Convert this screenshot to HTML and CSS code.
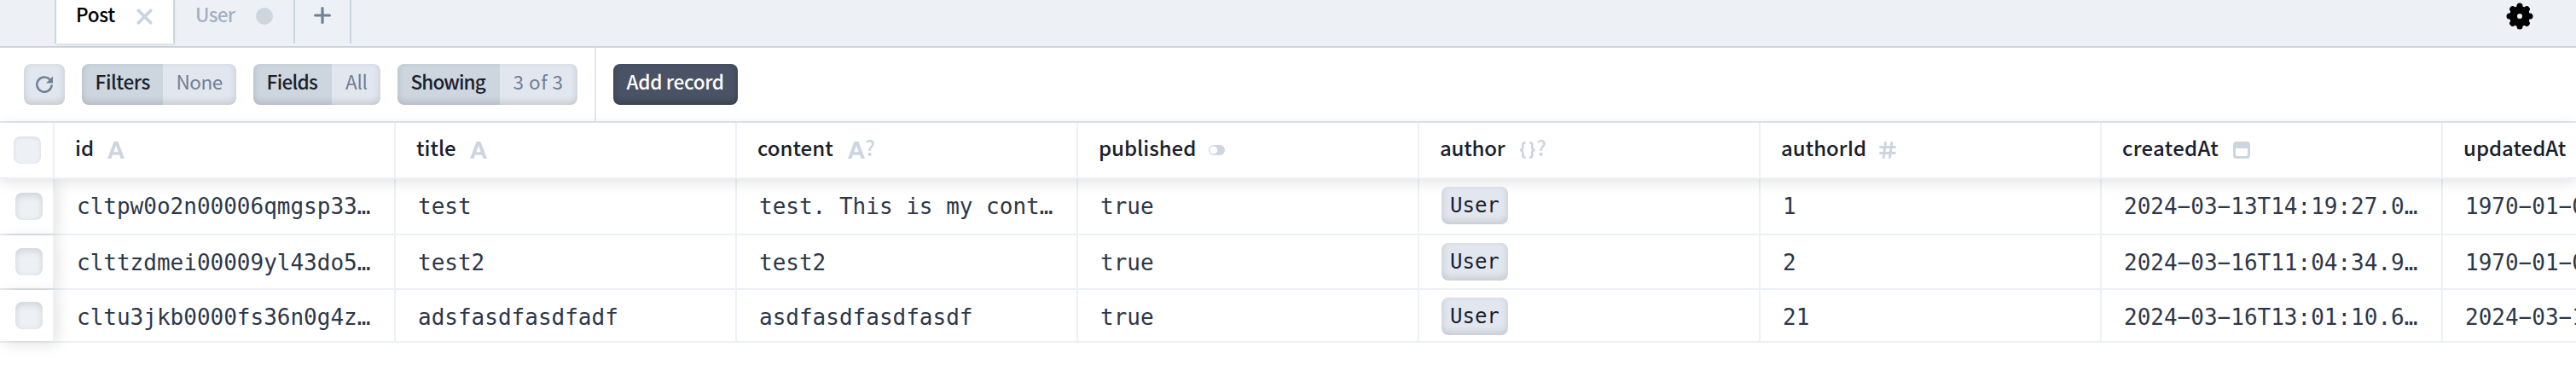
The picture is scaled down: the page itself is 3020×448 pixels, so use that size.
FILE: index.html
```html
<!DOCTYPE html>
<html lang="en">
<head>
<meta charset="utf-8">
<title>Post</title>
<link rel="stylesheet" href="styles.css">
</head>
<body>
<svg class="defs" width="0" height="0">
  <symbol id="i-text" viewBox="0 0 20 20"><path fill="currentColor" fill-rule="evenodd" d="M7.600 0h4.800L20 20h-4.400l-1.500-4.200H5.900L4.400 20H0zM10 4.700 7.300 12.200h5.400z"/></symbol>
  <symbol id="i-bool" viewBox="0 0 20 20"><rect y="4" width="19" height="12" rx="6" fill="currentColor"/><circle cx="5.700" cy="10" r="4.500" fill="#fff"/></symbol>
  <symbol id="i-obj" viewBox="0 0 20 20"><path fill="none" stroke="currentColor" stroke-width="2.700" d="M7.500 1.400H6.800Q4.300 1.400 4.300 4v2.500Q4.300 10 1 10q3.300 0 3.300 3.500V16q0 2.600 2.500 2.600h.700M12 1.400h.700q2.500 0 2.500 2.600v2.500Q15.200 10 18.500 10q-3.300 0-3.300 3.500V16q0 2.600-2.500 2.600H12"/></symbol>
  <symbol id="i-num" viewBox="0 0 20 20"><path fill="none" stroke="currentColor" stroke-width="3" stroke-linecap="round" d="M7.500 1.500l-2.300 17M14.800 1.500l-2.300 17M1.500 6.500h17M1.500 13.500h17"/></symbol>
  <symbol id="i-date" viewBox="0 0 20 20"><path fill="currentColor" fill-rule="evenodd" d="M4 0h12a4 4 0 0 1 4 4v12a4 4 0 0 1-4 4H4a4 4 0 0 1-4-4V4a4 4 0 0 1 4-4zM3 8v7q0 2 2 2h10q2 0 2-2V8z"/></symbol>
</svg>

<nav class="tabs">
  <div class="tab tab-active"><span class="tab-label">Post</span>
    <svg class="close" viewBox="0 0 20 20"><path d="M2.500 2.500l15 15M17.500 2.500l-15 15"/></svg></div>
  <div class="tab tab-idle"><span class="tab-label">User</span><i class="dot"></i></div>
  <div class="tab tab-add"><svg class="plus" viewBox="0 0 20 20"><path d="M10 1.600v16.800M1.600 10h16.800"/></svg></div>
  <svg class="gear" viewBox="0 0 32 32"><g stroke="#000" stroke-width="7" stroke-linecap="round"><path d="M16 4v5M16 23v5M4 16h5M23 16h5M7.700 7.700l3 3M21.300 21.300l3 3M24.300 7.700l-3 3M10.700 21.300l-3 3"/></g><circle cx="16" cy="16" r="7.500" fill="none" stroke="#000" stroke-width="9"/></svg>
</nav>

<header class="toolbar">
  <button class="btn refresh"><svg viewBox="0 0 20 20"><path class="arc" d="M16.300 4.100A8.700 8.700 0 1 0 18.600 11.500"/><path class="head-arrow" d="M20 .5V8.500h-8z"/></svg></button>
  <button class="btn filters"><b>Filters</b><span>None</span></button>
  <button class="btn fields"><b>Fields</b><span>All</span></button>
  <button class="btn showing"><b>Showing</b><span>3 of 3</span></button>
  <i class="divider"></i>
  <button class="btn add">Add record</button>
</header>

<main class="grid">
  <div class="row head">
    <div class="check"><i></i></div>
    <div class="cell"><span class="name n-id">id</span><svg><use href="#i-text"/></svg></div>
    <div class="cell"><span class="name n-title">title</span><svg><use href="#i-text"/></svg></div>
    <div class="cell"><span class="name n-content">content</span><svg><use href="#i-text"/></svg><span class="opt">?</span></div>
    <div class="cell"><span class="name n-published">published</span><svg><use href="#i-bool"/></svg></div>
    <div class="cell"><span class="name n-author">author</span><svg><use href="#i-obj"/></svg><span class="opt">?</span></div>
    <div class="cell"><span class="name n-authorid">authorId</span><svg><use href="#i-num"/></svg></div>
    <div class="cell"><span class="name n-created">createdAt</span><svg><use href="#i-date"/></svg></div>
    <div class="cell"><span class="name n-updated">updatedAt</span></div>
  </div>
  <div class="body">
    <div class="row r1">
      <div class="check"><i></i></div>
      <div class="cell">cltpw0o2n00006qmgsp33…</div><div class="cell">test</div><div class="cell">test. This is my cont…</div><div class="cell">true</div>
      <div class="cell"><span class="btn chip">User</span></div><div class="cell">1</div><div class="cell">2024−03−13T14:19:27.0…</div><div class="cell">1970−01−0</div>
    </div>
    <div class="row r2">
      <div class="check"><i></i></div>
      <div class="cell">clttzdmei00009yl43do5…</div><div class="cell">test2</div><div class="cell">test2</div><div class="cell">true</div>
      <div class="cell"><span class="btn chip">User</span></div><div class="cell">2</div><div class="cell">2024−03−16T11:04:34.9…</div><div class="cell">1970−01−0</div>
    </div>
    <div class="row r3">
      <div class="check"><i></i></div>
      <div class="cell">cltu3jkb0000fs36n0g4z…</div><div class="cell">adsfasdfasdfadf</div><div class="cell">asdfasdfasdfasdf</div><div class="cell">true</div>
      <div class="cell"><span class="btn chip">User</span></div><div class="cell">21</div><div class="cell">2024−03−16T13:01:10.6…</div><div class="cell">2024−03−1</div>
    </div>
  </div>
</main>
</body>
</html>
```
FILE: styles.css
```css
* { box-sizing: border-box; }
body {
  margin: 0;
  height: 448px;
  overflow: hidden;
  background: #fff;
  color: #1a202c;
  font-family: "Noto Sans CJK KR", "Noto Sans", sans-serif;
  font-size: 24px;
  font-weight: 500;
}
.defs { position: absolute; }
svg { flex: none; display: block; }

/* tab bar */
.tabs {
  display: flex;
  height: 56px;
  padding-left: 64px;
  background: #edf1f6;
  border-bottom: 2px solid #cbd5de;
  font-size: 22.5px;
}
.tab {
  display: flex;
  height: 51px;
  border-right: 2px solid #cbd5de;
  line-height: 33px;
  letter-spacing: -.3px;
}
.tab-active {
  width: 139px;
  margin-left: 2px;
  padding-left: 23px;
  background: #fff;
  color: #000;
  box-shadow: -2px 0 0 #cbd5de, 0 2px 3px rgba(0, 0, 0, .07);
}
.tab-active .tab-label { width: 71px; }
.tab-idle { width: 141px; padding-left: 24px; color: #a3b0c4; letter-spacing: -.7px; }
.tab-idle .tab-label { width: 71px; }
.tab-add { width: 66px; padding-left: 22px; }
.close { width: 19px; height: 19px; margin-top: 10px; }
.close path { stroke: #cbd5e0; stroke-width: 4; stroke-linecap: round; }
.dot { width: 20px; height: 20px; margin-top: 9px; border-radius: 50%; background: #cdd5df; }
.plus { width: 20px; height: 20px; margin-top: 8px; }
.plus path { stroke: #718096; stroke-width: 3.200; stroke-linecap: round; }
.gear { width: 32px; height: 32px; margin: 3px 50px 0 auto; }

/* toolbar */
.toolbar {
  display: flex;
  height: 88px;
  padding-left: 28px;
  border-bottom: 2px solid #e2e7ee;
  font-size: 22.5px;
}
.btn {
  display: flex;
  border: 0;
  padding: 0;
  overflow: hidden;
  font: inherit;
  text-align: left;
  white-space: nowrap;
  border-radius: 8px;
  background: #e2e7ef;
  position: relative;
}
.btn::after {
  content: "";
  position: absolute;
  inset: 0;
  border-radius: inherit;
  box-shadow: inset 0 -3px 8px rgba(0, 0, 0, .14);
}
.toolbar .btn { height: 48px; margin: 19px 20px 0 0; line-height: 41px; letter-spacing: -.3px; }
.btn b { flex: none; font-weight: 500; background: #cdd5df; color: #1a202c; height: 48px; padding-left: 15.600px; }
.btn span { color: #718096; font-weight: 400; padding-left: 15.600px; }
.refresh { width: 48px; }
.refresh svg { width: 20px; height: 20px; margin: 14px; }
.arc { fill: none; stroke: #718096; stroke-width: 2.500; stroke-linecap: round; }
.head-arrow { fill: #718096; }
.filters { width: 181px; }
.filters b { width: 95px; letter-spacing: -.4px; }
.filters span { letter-spacing: -.5px; }
.fields { width: 149px; }
.fields b { width: 92px; letter-spacing: -.7px; }
.fields span { padding-left: 16px; }
.showing { width: 211px; }
.showing b { width: 120px; letter-spacing: -.9px; }
.showing span { letter-spacing: .5px; }
.divider { width: 2px; height: 86px; margin-right: 20px; background: #e2e7ee; }
.toolbar .add { width: 146px; padding-left: 15.600px; background: #4a5365; color: #fff; }
.add::after { box-shadow: inset 0 -3px 8px rgba(0, 0, 0, .26); }

/* grid */
.row { display: flex; border-bottom: 2px solid #edf0f5; }
.check { width: 64px; flex: none; border-right: 2px solid #edf0f5; padding: 16px 0 0 18px; background: #fff; }
.check i {
  display: block;
  width: 32px;
  height: 32px;
  border-radius: 8px;
  background: #edf0f5;
  box-shadow: inset 0 3px 8px rgba(0, 0, 0, .13);
}
.cell { width: 400px; flex: none; border-right: 2px solid #edf0f5; overflow: hidden; white-space: nowrap; }
.cell:last-child { flex: 1; min-width: 0; border-right: 0; }
.row.head { height: 66px; position: relative; background: #fff; box-shadow: 0 4px 16px rgba(0, 0, 0, .11); }
.head .check { padding-left: 16px; }
.head .check i { box-shadow: inset 0 1px 5px rgba(0, 0, 0, .09); }
.head .cell { display: flex; padding-left: 24px; line-height: 58px; }
.head .cell svg { width: 20px; height: 20px; margin-top: 22px; color: #cdd5e0; }
.opt { color: #cdd5e0; font-weight: 500; }
.n-id { width: 38px; }
.n-title { width: 63px; }
.n-content { width: 106px; }
.n-published { width: 129px; }
.n-author { width: 93px; letter-spacing: -.2px; }
.n-authorid { width: 115px; }
.n-created { width: 130px; letter-spacing: .3px; }

.body { font-family: "DejaVu Sans Mono", monospace; font-size: 26px; font-weight: 400; color: #2d3748; }
.body .cell { padding-left: 26px; line-height: 64px; }
.body .check { box-shadow: 4px 4px 16px rgba(0, 0, 0, .11); }
.r1 { height: 66px; }
.r2 { height: 64px; }
.r3 { height: 62px; }
.r2 .check { padding-top: 15px; }
.r3 .check { padding-top: 14px; }
.body .chip { width: 78px; height: 44px; margin-top: 9px; padding-left: 10px; font-size: 24px; line-height: 44px; color: #1a202c; }
```
